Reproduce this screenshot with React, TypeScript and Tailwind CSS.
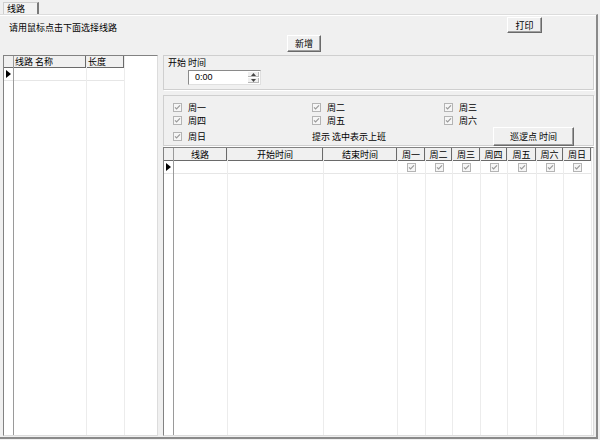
import React from 'react';

// right grid columns: label, width
const COLS: { label: string; w: string; day?: boolean }[] = [
  { label: '线路', w: 'w-[54px]' },
  { label: '开始时间', w: 'w-[96px]' },
  { label: '结束时间', w: 'w-[74px]' },
  { label: '周一', w: 'w-[28px]', day: true },
  { label: '周二', w: 'w-[27px]', day: true },
  { label: '周三', w: 'w-[28px]', day: true },
  { label: '周四', w: 'w-[27px]', day: true },
  { label: '周五', w: 'w-[29px]', day: true },
  { label: '周六', w: 'w-[27px]', day: true },
  { label: '周日', w: 'w-[28px]', day: true },
];

function Check() {
  return (
    <svg width="9" height="9" viewBox="0 0 9 9" className="shrink-0">
      <rect x="0.5" y="0.5" width="8" height="8" fill="#f6f6f6" stroke="#b4b4b4" />
      <path d="M2 4.3 L3.6 6 L7 2.4" stroke="#9a9a9a" strokeWidth="1.2" fill="none" />
    </svg>
  );
}

function Arrow() {
  return (
    <svg width="5" height="8" viewBox="0 0 5 8">
      <polygon points="0,0 5,4 0,8" fill="#000" />
    </svg>
  );
}

function Btn({ children, className = '' }: { children: React.ReactNode; className?: string }) {
  return (
    <div
      className={`flex items-center justify-center bg-[#f0f0f0] border border-t-white border-l-white border-r-[#6a6a6a] border-b-[#6a6a6a] shadow-[inset_-1px_-1px_0_#a0a0a0] ${className}`}
    >
      {children}
    </div>
  );
}

function DayBox({ label }: { label: string }) {
  return (
    <div className="flex items-center gap-[6px] h-[13px]">
      <Check />
      <span>{label}</span>
    </div>
  );
}

export default function App() {
  return (
    <div className="w-[600px] h-[440px] bg-[#f0f0f0] text-[9px] leading-[11px] text-black font-['Noto_Sans_CJK_SC',sans-serif] flex flex-col">
      {/* tab strip */}
      <div className="h-[14px] flex items-end">
        <div className="ml-[3px] w-[36px] h-[12px] border-t border-l border-[#cfcfcf] border-r-2 border-r-[#7a7a7a] pl-[3px] flex items-center bg-[#f3f3f3]">
          线路
        </div>
      </div>

      {/* tab page */}
      <div className="w-[598px] h-[425px] border-t border-t-[#dcdcdc] border-r-2 border-r-[#8a8a8a] border-b-2 border-b-[#8a8a8a] shadow-[inset_0_1px_0_#fff] flex flex-col">
        <div className="flex items-start justify-between pt-[2px] h-[20px]">
          <span className="ml-[9px] mt-[5px]">请用鼠标点击下面选择线路</span>
          <Btn className="w-[35px] h-[16px] mr-[54px]">打印</Btn>
        </div>
        <div className="h-[20px]">
          <Btn className="ml-[287px] w-[34px] h-[17px]">新增</Btn>
        </div>

        {/* main */}
        <div className="flex flex-1">
          {/* left grid */}
          <div className="ml-[3px] w-[155px] h-[381px] bg-white border border-[#828282] border-r-[#dcdcdc] border-b-[#dcdcdc] flex">
            <div className="w-[10px] flex flex-col border-r border-[#9a9a9a]">
              <div className="h-[12px] bg-[#f0f0f0] border-b border-[#6a6a6a]" />
              <div className="h-[13px] flex items-center pl-[2px] border-b border-[#e6e6e6]">
                <Arrow />
              </div>
            </div>
            <div className="w-[73px] flex flex-col border-r border-[#ececec]">
              <div className="h-[12px] bg-[#f0f0f0] border-b border-r border-[#6a6a6a] pl-[1px] flex items-center">线路 名称</div>
              <div className="h-[13px] border-b border-[#e6e6e6]" />
            </div>
            <div className="w-[38px] flex flex-col border-r border-[#ececec]">
              <div className="h-[12px] bg-[#f0f0f0] border-b border-r border-[#6a6a6a] pl-[1px] flex items-center">长度</div>
              <div className="h-[13px] border-b border-[#e6e6e6]" />
            </div>
            <div className="flex-1" />
          </div>

          {/* right column */}
          <div className="ml-[5px] w-[431px] h-[381px] flex flex-col">
            <div className="h-[35px] border border-[#cfcfcf] shadow-[1px_1px_0_#fff] pl-[4px] pt-[1px]">
              <div>开始 时间</div>
              <div className="ml-[20px] mt-[2px] w-[73px] h-[15px] bg-white border border-t-[#8a8a8a] border-l-[#8a8a8a] border-r-[#e0e0e0] border-b-[#e0e0e0] flex items-center">
                <span className="flex-1 pl-[6px] font-['Liberation_Sans',sans-serif]">0:00</span>
                <div className="w-[12px] h-full flex flex-col py-[1px] pr-[1px] gap-[1px]">
                  <div className="flex-1 flex items-center justify-center bg-[#f0f0f0] border-b border-r border-[#b8b8b8]">
                    <svg width="5" height="3" viewBox="0 0 5 3"><polygon points="2.5,0 5,3 0,3" fill="#444" /></svg>
                  </div>
                  <div className="flex-1 flex items-center justify-center bg-[#f0f0f0] border-b border-r border-[#b8b8b8]">
                    <svg width="5" height="3" viewBox="0 0 5 3"><polygon points="0,0 5,0 2.5,3" fill="#444" /></svg>
                  </div>
                </div>
              </div>
            </div>

            <div className="mt-[5px] h-[51px] border border-[#cfcfcf] shadow-[1px_1px_0_#fff] pl-[9px] pt-[5px]">
              <div className="grid grid-cols-[139px_132px_1fr]">
                <DayBox label="周一" />
                <DayBox label="周二" />
                <DayBox label="周三" />
                <DayBox label="周四" />
                <DayBox label="周五" />
                <DayBox label="周六" />
              </div>
              <div className="grid grid-cols-[139px_132px_1fr] items-center mt-[-1px] h-[20px]">
                <DayBox label="周日" />
                <span>提示 选中表示上班</span>
                <Btn className="ml-[49px] w-[81px] h-[19px]">巡逻点 时间</Btn>
              </div>
            </div>

            {/* right grid */}
            <div className="mt-[1px] flex-1 bg-white border border-[#828282] border-r-[#dcdcdc] border-b-[#dcdcdc] flex">
              <div className="w-[10px] flex flex-col border-r border-[#9a9a9a]">
                <div className="h-[13px] bg-[#f0f0f0] border-b border-[#6a6a6a]" />
                <div className="h-[13px] flex items-center pl-[2px] border-b border-[#e6e6e6]">
                  <Arrow />
                </div>
              </div>
              {COLS.map(c => (
                <div key={c.label} className={`${c.w} flex flex-col border-r border-[#ececec]`}>
                  <div className="h-[13px] bg-[#f0f0f0] border-b border-r border-[#6a6a6a] flex items-center justify-center">
                    {c.label}
                  </div>
                  <div className="h-[13px] border-b border-[#e6e6e6] flex items-center justify-center">
                    {c.day && <Check />}
                  </div>
                </div>
              ))}
              <div className="flex-1" />
            </div>
          </div>
        </div>
      </div>
    </div>
  );
}
